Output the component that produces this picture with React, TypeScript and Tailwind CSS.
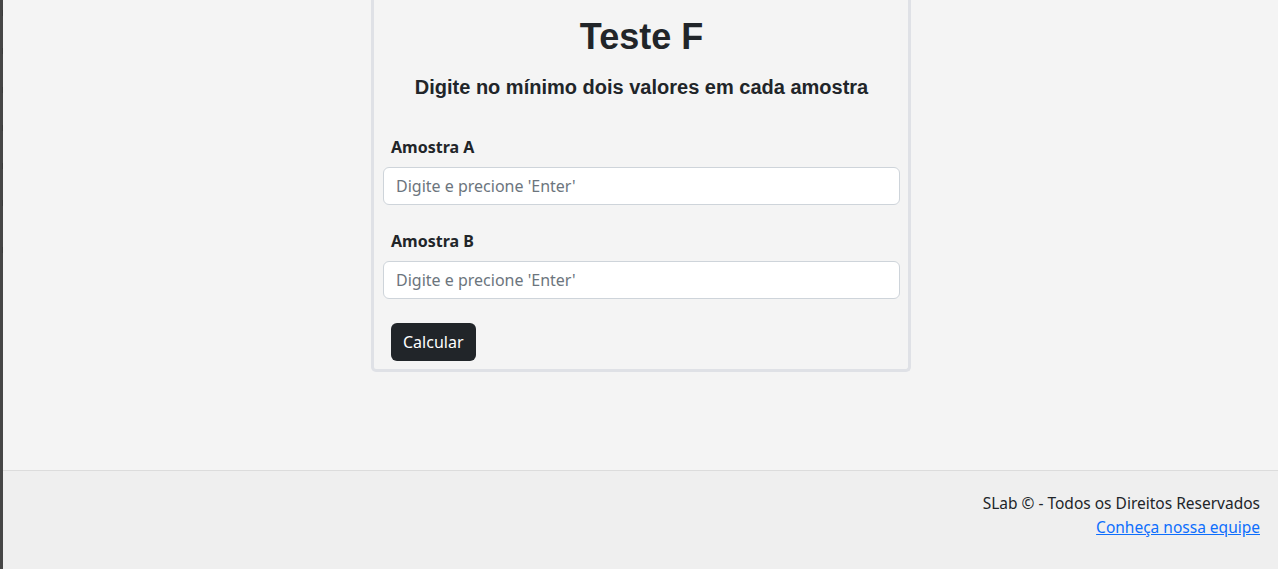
import React from 'react';

// clipped ends of the collapsed side menu's items
const sideMarks = [10, 48, 87, 125, 163, 200, 247];

const Field: React.FC<{ label: string }> = ({ label }) => (
  <div className="flex flex-col">
    <label className="px-2 text-[16px] leading-6 font-bold text-[#212529]">{label}</label>
    <input
      type="text"
      placeholder="Digite e precione 'Enter'"
      className="mt-2 h-[38px] w-full rounded-[6px] border border-[#ced4da] bg-white px-3 text-[16px] text-[#212529] placeholder:text-[#6c757d] outline-none"
    />
  </div>
);

export default function App() {
  return (
    <div className="flex min-h-[569px] bg-[#f4f4f4] font-['Noto_Sans',sans-serif] text-[#212529]">
      <div className="relative w-[3px] shrink-0 bg-[#464646]">
        {sideMarks.map((y) => (
          <span key={y} className="absolute left-[2px] h-[6px] w-[1px] bg-[#3a3a3a]" style={{ top: y }} />
        ))}
      </div>

      <div className="flex min-w-0 flex-1 flex-col">
        <main className="flex h-[470px] justify-center">
          <div className="ml-[1px] flex h-[372px] w-[540px] flex-col rounded-b-[5px] border-x-[3px] border-b-[3px] border-[#dfe1e6] pl-[9px] pr-[8px]">
            <h1 className="mt-[15px] text-center font-['Liberation_Sans',Arial,sans-serif] text-[36px] leading-[43px] font-bold">
              Teste F
            </h1>
            <h4 className="mt-[17px] text-center font-['Liberation_Sans',Arial,sans-serif] text-[20px] leading-6 font-bold">
              Digite no mínimo dois valores em cada amostra
            </h4>
            <div className="mt-[36px] flex flex-col gap-6">
              <Field label="Amostra A" />
              <Field label="Amostra B" />
              <div className="px-2">
                <button className="h-[38px] rounded-[6px] bg-[#212529] px-3 text-[16px] text-white">
                  Calcular
                </button>
              </div>
            </div>
          </div>
        </main>

        <footer className="flex h-[99px] flex-col items-end border-t border-[#dcdcdc] bg-[#efefef] pr-[18px] pt-[20px] text-[15.5px] leading-6">
          <span>SLab © - Todos os Direitos Reservados</span>
          <a href="#" className="text-[#0d6efd] underline">
            Conheça nossa equipe
          </a>
        </footer>
      </div>
    </div>
  );
}
